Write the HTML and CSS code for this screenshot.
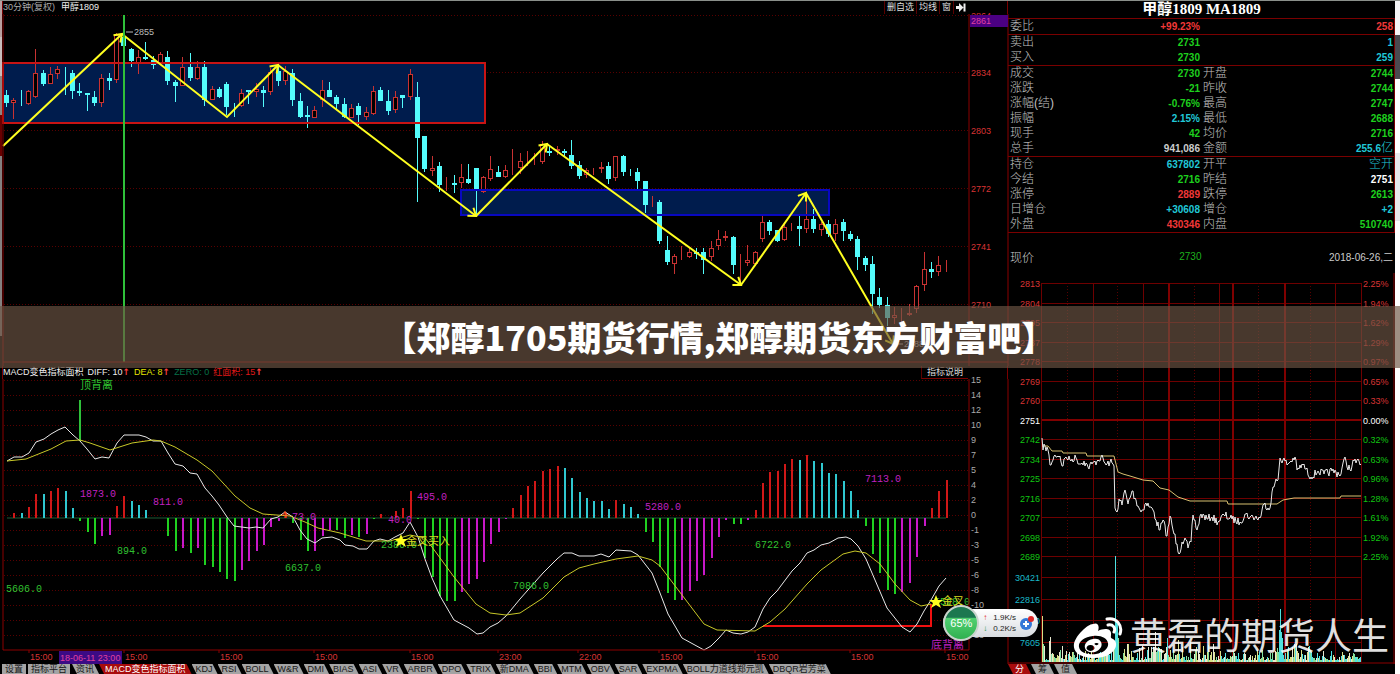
FILE: index.html
```html
<!DOCTYPE html>
<html lang="zh-CN">
<head>
    <meta charset="UTF-8">
    <meta name="viewport" content="width=device-width, initial-scale=1.0">
    <title>甲醇1809 MA1809</title>
    <link rel="stylesheet" href="styles.css">
</head>
<body>
    <div class="terminal">
        <div class="edge edge-left"></div>

        <main class="charts">
            <header class="chart-bar">
                <span class="dim">30分钟(复权)</span>
                <span class="name">甲醇1809</span>
                <nav class="tools">
                    <button type="button">删自选</button>
                    <button type="button">均线</button>
                    <button type="button">窗</button>
                    <button type="button" aria-label="下一页">
                        <svg class="next-icon" viewBox="0 0 10 9"><path d="M0 3h3V0l4.500 4.500L3 9V6H0zM7.500 0.500h2v8h-2z"/></svg>
                    </button>
                </nav>
            </header>

            <!-- Candlestick chart -->
            <svg class="plot" id="price-chart" viewBox="2 14 1006 352">
                <defs>
                    <marker id="arrow" viewBox="-8 -6 10 12" markerWidth="10" markerHeight="12" markerUnits="userSpaceOnUse" refX="0" refY="0" orient="auto">
                        <path d="M-7 -5L0 0L-7 5" fill="none" stroke="#ffff20" stroke-width="2"/>
                    </marker>
                </defs>
                <g id="price-grid"></g>
                <rect x="3" y="63" width="482" height="60" fill="#001c4d"/>
                <rect x="461" y="190" width="368" height="25" fill="#001c4d"/>
                <g id="candles"></g>
                <rect class="zone-red" x="3" y="63" width="482" height="60"/>
                <rect class="zone-blue" x="461" y="190" width="368" height="25"/>
                <path class="zigzag" d="M3 146L122 34"/>
                <path class="zigzag" d="M122 34L227 117L278 65"/>
                <path class="zigzag" d="M278 65L476 216"/>
                <path class="zigzag" d="M476 216L547 144"/>
                <path class="zigzag" d="M547 144L741 285"/>
                <path class="zigzag" d="M741 285L806 193"/>
                <path class="zigzag" d="M806 193L893 344"/>
                <path d="M124 15V362" stroke="#2fc03a" stroke-width="2"/>
                <path d="M126 32H133M896 344H903" stroke="#bbb"/>
                <text class="label-light" x="134" y="35">2855</text>
                <text class="label-light" x="904" y="347">2688</text>
                <path class="frame" d="M3 362H1008M3 14V366M969 14V366M1008 14V366"/>
                <rect x="970" y="15" width="38" height="12" fill="#4b0082"/>
                <text class="cursor-label" x="971" y="24">2861</text>
            </svg>

            <header class="chart-bar macd-bar">
                <span class="name">MACD变色指标面积</span>
                <span class="name">DIFF: 10<b class="up">↑</b></span>
                <span class="dea">DEA: 8<b class="up">↑</b></span>
                <span class="zero">ZERO: 0</span>
                <span class="area">红面积: 15<b class="up">↑</b></span>
                <nav class="tools">
                    <button type="button" class="help">指标说明</button>
                </nav>
            </header>

            <!-- MACD chart -->
            <svg class="plot" id="macd-chart" viewBox="2 379 1006 285">
                <g id="macd-grid"></g>
                <path d="M7 518H946" stroke="#1d5a35"/>
                <g id="macd-bars"></g>
                <path d="M80 400V441" stroke="#2fc03a" stroke-width="2"/>
                <path d="M763 626H931V604" fill="none" stroke="#f01010" stroke-width="2"/>
                <polyline id="diff-line" class="line-white"/>
                <polyline id="dea-line" class="line-yellow"/>
                <path d="M285 511V518M282 516L285 512L288 516" fill="none" stroke="#ff5020"/>
                <g id="macd-labels"></g>
                <path class="frame" d="M3 379V650H969V379M1008 379V664"/>
                <rect x="59" y="651" width="63" height="13" fill="#3b0a85"/>
                <g id="time-labels"></g>
                <path class="star" d="M401 534l2 5 5 0-4 3 2 5-5-3-5 3 2-5-4-3 5 0z"/>
                <path class="star" d="M936 595l2 5 5 0-4 3 2 5-5-3-5 3 2-5-4-3 5 0z"/>
            </svg>

            <nav class="tabs">
                <button type="button" class="square">设置</button>
                <button type="button" class="square">指标平台</button>
                <button type="button">资讯</button>
                <button type="button" class="active">MACD变色指标面积</button>
                <button type="button">KDJ</button>
                <button type="button">RSI</button>
                <button type="button">BOLL</button>
                <button type="button">W&amp;R</button>
                <button type="button">DMI</button>
                <button type="button">BIAS</button>
                <button type="button">ASI</button>
                <button type="button">VR</button>
                <button type="button">ARBR</button>
                <button type="button">DPO</button>
                <button type="button">TRIX</button>
                <button type="button">新DMA</button>
                <button type="button">BBI</button>
                <button type="button">MTM</button>
                <button type="button">OBV</button>
                <button type="button">SAR</button>
                <button type="button">EXPMA</button>
                <button type="button">BOLL力道线郑元凯</button>
                <button type="button">DBQR岩芳菜</button>
            </nav>

            <div class="net-widget">
                <div class="net-ball">65%</div>
                <div class="net-speed">
                    <span><i class="net-up">↑</i>1.9K/s</span>
                    <span><i class="net-down">↓</i>0.2K/s</span>
                </div>
                <svg class="net-plus" viewBox="0 0 14 16">
                    <circle cx="6" cy="9" r="6" fill="#3478d8"/>
                    <path d="M6 6v6M3 9h6" stroke="#fff" stroke-width="2"/>
                    <circle cx="11" cy="4" r="3" fill="#e02828"/>
                </svg>
            </div>
        </main>

        <aside class="quote">
            <h1>甲醇1809 MA1809</h1>
            <table>
                <tbody>
                    <tr class="sep"><th>委比</th><td class="red">+99.23%</td><th></th><td class="red">258</td></tr>
                    <tr><th>卖出</th><td class="green">2731</td><th></th><td class="cyan">1</td></tr>
                    <tr class="sep"><th>买入</th><td class="green">2730</td><th></th><td class="cyan">259</td></tr>
                    <tr><th>成交</th><td class="green">2730</td><th>开盘</th><td class="green">2744</td></tr>
                    <tr><th>涨跌</th><td class="green">-21</td><th>昨收</th><td class="green">2744</td></tr>
                    <tr><th>涨幅(结)</th><td class="green">-0.76%</td><th>最高</th><td class="green">2747</td></tr>
                    <tr><th>振幅</th><td class="cyan">2.15%</td><th>最低</th><td class="green">2688</td></tr>
                    <tr><th>现手</th><td class="green">42</td><th>均价</th><td class="green">2716</td></tr>
                    <tr class="sep"><th>总手</th><td>941,086</td><th>金额</th><td class="cyan">255.6<span class="cjk">亿</span></td></tr>
                    <tr><th>持仓</th><td class="cyan">637802</td><th>开平</th><td class="cyan"><span class="cjk">空开</span></td></tr>
                    <tr><th>今结</th><td class="green">2716</td><th>昨结</th><td class="white">2751</td></tr>
                    <tr><th>涨停</th><td class="red">2889</td><th>跌停</th><td class="green">2613</td></tr>
                    <tr><th>日增仓</th><td class="cyan">+30608</td><th>增仓</th><td class="cyan">+2</td></tr>
                    <tr class="sep"><th>外盘</th><td class="red">430346</td><th>内盘</th><td class="green">510740</td></tr>
                </tbody>
            </table>
            <div class="now">
                <span class="now-label">现价</span>
                <span class="now-price">2730</span>
                <span class="now-date">2018-06-26,二</span>
            </div>

            <!-- Intraday chart -->
            <svg class="plot" id="day-chart" viewBox="1008 273 387 391">
                <g id="day-grid"></g>
                <g id="volume"></g>
                <polyline id="avg-line" class="line-avg"/>
                <polyline id="day-line" class="line-white"/>
                <path class="frame" d="M1008 663H1395M1394 273V664"/>
            </svg>

            <nav class="tabs day-tabs">
                <button type="button" class="active">分</button>
                <button type="button">筹</button>
                <button type="button">值</button>
            </nav>

            <div class="watermark">
                <svg class="weibo" viewBox="0 0 50 42">
                    <path fill="#fff" fill-rule="evenodd" d="M20 7C24 5 27 8 25 14C31 11 39 11 38 18C38 20 37 21 40 22C45 25 44 32 37 37C28 43 11 42 4 36C-3 29 3 20 9 14C13 10 17 7 20 7ZM20 19C11 20 5 25 6 30C7 36 15 38 23 37C31 36 36 31 35 26C34 21 28 18 20 19Z"/>
                    <path fill="#fff" fill-rule="evenodd" d="M20 22C14 23 11 27 12 31C13 35 18 36 22 35C27 33 30 29 28 25C27 22 23 21 20 22ZM17 28a4 3 0 1 0 1 0ZM23 26a2 1 0 1 0 1 0Z"/>
                    <path d="M34 2C43 0 50 8 47 17M35 8C40 7 43 11 41 15" fill="none" stroke="#fff" stroke-width="3" stroke-linecap="round"/>
                </svg>
                <span>黄磊的期货人生</span>
            </div>
        </aside>

        <div class="edge edge-right"></div>
    </div>

    <div class="banner">【郑醇1705期货行情,郑醇期货东方财富吧】</div>

    <script src="chart.js"></script>
</body>
</html>
```
FILE: styles.css
```css
* {
    box-sizing: border-box;
}

body {
    margin: 0;
    background: #000;
    color: #ccc;
    font-family: "Liberation Sans", "Noto Sans CJK SC", sans-serif;
    font-size: 9px;
    overflow-x: hidden;
}

button {
    font-family: inherit;
    font-size: inherit;
    color: inherit;
    background: none;
    border: 0;
    margin: 0;
    padding: 0;
    cursor: pointer;
}

.terminal {
    display: grid;
    grid-template-columns: 2px minmax(0, 1006fr) minmax(0, 387fr) 5px;
    border-top: 1px solid #8a8f8a;
}

.edge-left {
    background: linear-gradient(#b9a0a0 0 36px, #c8bcbc 36px 75px, #8c8484 75px 114px, #6a0000 114px 155px, #848080 155px 335px, #000 335px);
}

.edge-right {
    background: linear-gradient(#f4f4f6 0 34px, #4a4a50 34px 78px, #fff 78px 152px, #e8e8ec 152px 220px, #fff 220px);
}

.charts,
.quote {
    position: relative;
}

.plot {
    display: block;
    width: 100%;
    height: auto;
    overflow: visible;
}

/* Bars above the charts */
.chart-bar {
    display: flex;
    align-items: center;
    gap: 6px;
    height: 13px;
    padding: 0 39px 0 0;
    line-height: 13px;
    white-space: nowrap;
    border-left: 1px solid #7a0000;
    border-right: 1px solid #7a0000;
}

.macd-bar {
    gap: 4px;
}

.dim {
    color: #aaa;
}

.name {
    color: #eee;
}

.dea {
    color: #e6e600;
}

.zero {
    color: #067048;
}

.area {
    color: #e01818;
}

.up {
    color: #ff4040;
    font-family: "DejaVu Sans", sans-serif;
}

.tools {
    display: flex;
    margin-left: auto;
}

.tools button {
    height: 13px;
    padding: 0 2px;
    line-height: 13px;
    border-left: 1px solid #5a0000;
    color: #ddd;
}

.tools .help {
    padding: 0 5px;
    border-bottom: 1px solid #7a0000;
}

.next-icon {
    display: block;
    width: 10px;
    height: 9px;
    fill: #eee;
}

/* Chart parts */
.grid-dot {
    stroke: #580000;
    stroke-dasharray: 1 2;
}

.grid-line {
    stroke: #6e0000;
}

.grid-bold {
    stroke: #800000;
    stroke-width: 2;
}

.frame {
    fill: none;
    stroke: #8c0000;
}

.axis-red {
    fill: #d83434;
}

.axis-gray {
    fill: #aaa;
}

.axis-white {
    fill: #fff;
}

.axis-green {
    fill: #12c512;
}

.axis-cyan {
    fill: #1ab8c8;
}

.label-light {
    fill: #bbb;
}

.cursor-label {
    fill: #e040a0;
}

.zone-red {
    fill: none;
    stroke: #c81414;
    stroke-width: 2;
}

.zone-blue {
    fill: none;
    stroke: #0808c0;
    stroke-width: 2;
}

.zigzag {
    fill: none;
    stroke: #ffff20;
    stroke-width: 2;
    marker-end: url(#arrow);
}

.candle-up {
    fill: #000;
    stroke: #c83232;
}

.candle-down {
    fill: #54fcfc;
    stroke: #54fcfc;
}

.line-white {
    fill: none;
    stroke: #e8e8e8;
}

.line-yellow {
    fill: none;
    stroke: #c8c828;
}

.line-avg {
    fill: none;
    stroke: #d8c070;
}

.star {
    fill: #ffff20;
}

.mono {
    font-family: "Liberation Mono", "Noto Sans CJK SC", monospace;
    font-size: 10px;
}

.note {
    font-size: 11px;
}

.magenta {
    fill: #c020c0;
}

.lime {
    fill: #30c030;
}

.yellow {
    fill: #d8d820;
}

/* Tabs at the bottom */
.tabs {
    display: flex;
    height: 10px;
}

.tabs button {
    flex: none;
    height: 10px;
    padding: 0 5px 0 4px;
    line-height: 10px;
    background: #a4a4a4;
    color: #181818;
    clip-path: polygon(0 0, calc(100% - 5px) 0, 100% 100%, 5px 100%);
}

.tabs .square {
    padding: 0 3px;
    margin-right: 2px;
    clip-path: none;
}

.tabs .active {
    padding: 0 6px;
    background: #a80c0c;
    color: #fff;
}

.day-tabs button,
.day-tabs .active {
    padding: 0 7px;
}

/* Quote panel */
.quote h1 {
    margin: 0;
    height: 18px;
    line-height: 17px;
    text-align: center;
    color: #fff;
    font-family: "Liberation Serif", "Noto Sans CJK SC", serif;
    font-size: 15px;
    border-bottom: 1px solid #7a0000;
}

.quote table {
    width: 100%;
    table-layout: fixed;
    border-collapse: separate;
    border-spacing: 0;
    border-right: 1px solid #7a0000;
}

.quote th,
.quote td {
    height: 15px;
    padding: 0 1px 0 2px;
    line-height: 15px;
    white-space: nowrap;
}

.quote th {
    text-align: left;
    font-size: 12px;
    font-weight: 300;
    color: #c0c0c0;
}

.quote td {
    text-align: right;
    font-size: 10px;
    font-weight: bold;
    color: #ccc;
}

.quote .sep th,
.quote .sep td {
    height: 16px;
    border-bottom: 1px solid #7a0000;
}

.quote .red {
    color: #f03838;
}

.quote .green {
    color: #1ed01e;
}

.quote .cyan {
    color: #20c8d8;
}

.quote .white {
    color: #fff;
}

.cjk {
    font-size: 12px;
    font-weight: 300;
}

.now {
    display: grid;
    grid-template-columns: 1fr 1fr 2fr;
    align-items: center;
    height: 40px;
    padding: 6px 2px 0;
    font-size: 10px;
}

.now-label {
    font-size: 12px;
    font-weight: 300;
}

.now-price {
    text-align: right;
    color: #1eb01e;
}

.now-date {
    text-align: right;
}

/* Things that float over the charts */
.banner {
    position: absolute;
    top: 306px;
    left: 0;
    right: 0;
    padding-left: 38px;
    background: rgba(109, 85, 68, 0.66);
    color: #fff;
    font-family: "Noto Sans CJK SC", sans-serif;
    font-size: 34px;
    font-weight: 900;
    line-height: 62px;
    text-align: center;
    white-space: nowrap;
}

.net-widget {
    position: absolute;
    right: -30px;
    bottom: 37px;
    z-index: 2;
    display: flex;
    align-items: center;
    gap: 4px;
    height: 28px;
    padding-right: 4px;
    border-radius: 14px;
    background: linear-gradient(#fff, #d8dce0);
    color: #222;
    font-size: 8px;
}

.net-ball {
    width: 36px;
    height: 36px;
    border: 2px solid #c8d4cc;
    border-radius: 50%;
    background: linear-gradient(#1c7850 0 32%, #50d070 36%, #30b050);
    color: #fff;
    font-size: 11px;
    line-height: 32px;
    text-align: center;
}

.net-speed span {
    display: flex;
    justify-content: space-between;
    gap: 6px;
    line-height: 11px;
}

.net-speed i {
    font-style: normal;
    font-weight: bold;
}

.net-up {
    color: #e03030;
}

.net-down {
    color: #209040;
}

.net-plus {
    width: 14px;
    height: 16px;
}

.watermark {
    position: absolute;
    right: 6px;
    bottom: 12px;
    display: flex;
    align-items: center;
    gap: 7px;
    color: rgba(255, 255, 255, 0.88);
    font-size: 37px;
    font-weight: 400;
    line-height: 48px;
    white-space: nowrap;
}

.weibo {
    width: 50px;
    height: 42px;
}
```
FILE: chart.js
```js
const NS = "http://www.w3.org/2000/svg";
const STEP = 7.34;

function add(parentId, tag, attrs, text) {
    const el = document.createElementNS(NS, tag);
    for (const key in attrs) {
        el.setAttribute(key, attrs[key]);
    }
    if (text !== undefined) {
        el.textContent = text;
    }
    document.getElementById(parentId).appendChild(el);
}

function barX(i) {
    return Math.round(7 + i * STEP);
}

// kind, high, body top, body bottom, low (r = up, c = down)
const candles = `c90,95,103,107 r98,100,103,119 c90,103,104,106 r90,91,104,105 r49,73,97,98 c70,73,84,86 r67,74,84,84 r66,69,74,79 c67,69,70,95 c70,73,91,99
c83,91,93,96 c93,93,95,111 c91,97,103,106 r74,78,103,107 c73,78,81,90 r33,35,80,83 c36,37,46,46 c48,49,61,67 r50,57,63,74 c42,57,59,60
c56,60,65,69 r52,54,63,63 c51,57,81,85 c80,82,86,102 r57,67,86,86 c53,67,78,81 r61,67,79,80 c61,67,100,106 r86,89,100,100 c87,89,97,98
c82,84,107,115 c103,107,108,117 r89,93,106,107 c90,90,92,104 r83,89,92,97 c86,90,93,107 r68,72,92,95 c64,71,81,86 r66,71,81,85 c69,73,100,106
c93,101,117,118 c106,115,117,128 r106,110,118,118 r80,90,100,107 c82,90,97,97 c95,97,104,109 c98,104,117,118 r104,108,118,118 c103,106,115,125 r107,112,117,120
r86,91,114,115 c87,90,101,101 c90,101,111,115 r91,97,110,113 c95,95,98,108 r69,74,97,100 c82,97,138,202 c136,136,169,172 r156,168,171,176 c162,166,185,192
r177,182,183,191 c175,183,185,193 r164,177,183,188 c164,179,183,184 c168,168,191,215 r176,177,192,193 r156,169,179,181 c166,172,177,177 r165,170,177,178 r149,168,169,175
r153,161,168,174 r151,161,162,166 r153,161,162,165 r141,144,162,164 c145,151,153,156 r146,149,151,155 c149,151,153,156 c140,155,166,169 c161,165,176,179 r168,170,175,178
r168,170,171,175 r162,167,169,173 c162,166,179,184 r156,156,178,181 c155,156,172,176 c169,172,173,176 c168,172,181,190 c181,181,205,213 r196,203,204,207 c200,202,241,244
c236,250,262,265 r254,256,264,274 r246,256,257,260 r248,252,257,258 c248,252,254,259 c248,252,260,274 r241,248,257,261 r230,239,246,250 r231,236,238,241 c236,237,265,274
r254,265,266,284 r245,260,263,266 r251,252,264,266 r215,222,239,242 c220,222,231,235 c230,230,241,242 r222,227,240,241 r223,226,227,231 c215,226,229,246 r194,219,229,233
c209,219,229,233 r222,224,230,236 c220,224,234,237 r219,224,234,241 c219,222,231,241 c231,234,239,241 c236,239,257,270 c256,258,265,271 c256,264,294,314 c288,297,305,308
c297,305,318,326 r307,315,318,324 r308,315,316,323 r304,313,315,316 r285,286,309,313 r252,269,285,291 c262,269,272,278 r256,265,272,276 r260,265,266,272`;

candles.split(/\s+/).forEach((item, i) => {
    const [high, top, bottom, low] = item.slice(1).split(",").map(Number);
    const cls = item[0] === "r" ? "candle-up" : "candle-down";
    const x = barX(i) - 0.5;
    add("candles", "path", { class: cls, d: `M${x} ${high}V${low}` });
    add("candles", "rect", { class: cls, x: x - 2, y: top + 0.5, width: 4, height: Math.max(bottom - top - 1, 0) });
});

// Price grid and axis
add("price-grid", "path", { class: "grid-dot", d: "M4 15.5H969" });
add("price-grid", "text", { class: "axis-red", x: 971, y: 19 }, 2864);
[2834, 2803, 2772, 2741, 2710].forEach((price, i) => {
    const y = 72 + i * 58;
    add("price-grid", "path", { class: "grid-dot", d: `M4 ${y + 0.5}H969` });
    add("price-grid", "text", { class: "axis-red", x: 971, y: y + 4 }, price);
});

// MACD histogram (r red, c cyan, g green, m magenta)
const barColors = { r: "#d01818", c: "#30c8d0", g: "#20d020", m: "#c818c8" };
const bars = `r0 r5 c5 r11 r24 c24 r27 r30 c27 c10 g-3 g-14 g-26 m-18 m-17 r12 r22 c17 c13 c8 r0 r0 g-18 g-33 m-30 g-35 m-30 g-47 g-49 g-54 g-61 g-63
m-52 m-43 m-33 m-27 m-9 m-3 r5 g-5 g-22 g-33 m-33 m-18 m-12 g-12 g-20 m-17 g-19 m-16 g-1 r4 r0 r7 r10 r27 g-1 g-40 g-59 g-78 g-83 g-83 m-74 m-66
m-61 m-44 m-26 m-14 m-1 r10 r23 r32 r37 r47 r49 r52 c50 c40 c26 c20 c17 c17 c9 r18 c14 c11 c4 g-14 g-24 g-49 g-75 g-82 m-82 m-73 m-63 m-57
m-40 m-19 m-2 g-6 g-6 m-2 r8 r35 r46 r47 r54 r59 c58 r63 c57 c55 c45 c44 c37 c27 c8 g-8 g-36 g-55 g-72 g-76 m-74 m-65 m-39 m-8 r10 r27 r38`;

bars.split(/\s+/).forEach((item, i) => {
    const value = Number(item.slice(1));
    if (value) {
        add("macd-bars", "path", { stroke: barColors[item[0]], "stroke-width": 2, d: `M${barX(i)} 518V${518 - value}` });
    }
});

[15, 14, 12, 10, 9, 7, 5, 4, 2, 0, -1, -3, -5, -6, -8, -10, -11, -13].forEach((value, i) => {
    const y = 380 + i * 15;
    add("macd-grid", "path", { class: "grid-dot", d: `M4 ${y + 0.5}H969` });
    add("macd-grid", "text", { class: "axis-gray", x: 971, y: y + 3 }, value);
});

const diff = "7,461 14,457 22,457 29,453 36,442 44,439 51,434 58,430 65,427 73,435 80,441 87,449 95,459 102,457 109,458 117,443 124,435 139,435 146,437 153,441 161,441 168,453 175,464 183,466 190,473 197,474 205,488 212,496 219,505 227,517 234,526 249,528 256,527 263,528 271,519 278,517 285,512 293,517 300,530 307,539 315,543 322,538 332,537 340,540 345,545 353,546 359,549 367,549 374,541 380,539 388,541 395,537 403,533 410,522 418,537 425,559 432,578 440,596 454,620 469,628 477,634 483,633 490,627 498,623 506,616 520,599 535,582 543,573 557,559 564,553 572,553 579,556 594,556 601,554 609,557 616,550 631,551 638,555 652,573 660,593 668,614 682,638 704,650 711,646 719,638 726,630 733,633 741,634 748,632 755,627 763,609 770,598 777,591 792,571 800,563 807,553 814,550 821,545 829,543 838,538 846,537 851,539 858,546 866,559 887,608 902,627 910,632 917,624 924,611 931,600 939,586 946,578";
const dea = "7,461 26,459 51,449 66,441 80,440 90,443 110,450 132,443 153,440 161,441 175,447 197,460 212,471 235,496 250,508 263,514 290,516 305,522 318,528 340,533 366,541 390,541 400,538 410,535 425,538 432,547 454,577 476,604 490,613 506,615 520,613 543,598 564,577 579,568 594,564 616,559 638,556 652,560 660,566 682,595 704,624 717,630 755,631 770,622 785,609 807,584 821,570 843,554 855,551 866,553 880,564 895,584 910,600 921,606 931,604";
document.getElementById("diff-line").setAttribute("points", diff);
document.getElementById("dea-line").setAttribute("points", dea);

[
    [80, 497, "magenta", "1873.0"], [153, 505, "magenta", "811.0"], [117, 554, "lime", "894.0"],
    [6, 592, "lime", "5606.0"], [285, 571, "lime", "6637.0"], [292, 520, "magenta", "73.0"],
    [388, 523, "magenta", "40.0"], [417, 500, "magenta", "495.0"], [381, 548, "lime", "2386.0"],
    [513, 589, "lime", "7086.0"], [645, 510, "magenta", "5280.0"], [755, 548, "lime", "6722.0"],
    [865, 482, "magenta", "7113.0"], [934, 605, "lime", "5528.0"]
].forEach(([x, y, color, text]) => add("macd-labels", "text", { class: "mono " + color, x, y }, text));

add("macd-labels", "text", { class: "note lime", x: 80, y: 389 }, "顶背离");
add("macd-labels", "text", { class: "note magenta", x: 931, y: 649 }, "底背离");
add("macd-labels", "text", { class: "note yellow", x: 406, y: 545 }, "金叉买入");
add("macd-labels", "text", { class: "note yellow", x: 942, y: 605 }, "金叉");

[[30, "15:00"], [125, "15:00"], [220, "15:00"], [315, "15:00"], [411, "15:00"], [499, "23:00"], [579, "22:00"], [660, "15:00"], [756, "15:00"], [851, "15:00"], [946, "15:00"]]
    .forEach(([x, text]) => {
        add("time-labels", "path", { class: "frame", d: `M${x - 1} 650V653` });
        add("time-labels", "text", { class: "axis-red", x: x, y: 660 }, text);
    });
add("time-labels", "text", { class: "cursor-label", x: 60, y: 661 }, "18-06-11 23:00");

// Intraday grid
const left = [2813, 2804, 2795, 2787, 2778, 2769, 2760, 2751, 2742, 2734, 2725, 2716, 2707, 2698, 2689];
const right = ["2.25%", "1.94%", "1.62%", "1.29%", "0.97%", "0.65%", "0.33%", "0.00%", "0.32%", "0.63%", "0.96%", "1.28%", "1.61%", "1.92%", "2.25%"];
left.forEach((price, i) => {
    const y = Math.round(283 + i * 19.5);
    const color = i < 7 ? "axis-red" : i === 7 ? "axis-white" : "axis-green";
    add("day-grid", "path", { class: i === 7 ? "grid-bold" : "grid-line", d: `M1041 ${i === 7 ? y : y + 0.5}H1361` });
    add("day-grid", "text", { class: color, x: 1040, y: y + 4, "text-anchor": "end" }, price);
    add("day-grid", "text", { class: color, x: 1363, y: y + 4 }, right[i]);
});
[30421, 22816, 15210, 7605].forEach((vol, i) => {
    const y = Math.round(577 + i * 21.5);
    add("day-grid", "path", { class: "grid-line", d: `M1041 ${y + 0.5}H1361` });
    add("day-grid", "text", { class: "axis-cyan", x: 1040, y: y + 4, "text-anchor": "end" }, vol);
});
[[1041, "line"], [1067, "dot"], [1093, "line"], [1117, "dot"], [1143, "line"], [1169, "bold"], [1194, "dot"], [1219, "line"], [1233, "bold"], [1258, "dot"], [1285, "bold"], [1310, "dot"], [1335, "line"], [1361, "line"]]
    .forEach(([x, kind]) => {
        add("day-grid", "path", { class: "grid-" + kind, d: `M${kind === "bold" ? x : x + 0.5} 283V662` });
    });

let seed = 7;
function random() {
    seed = (seed * 16807) % 2147483647;
    return seed / 2147483647;
}

// Intraday price with tick noise between the turning points
const turns = [1042,438,1043,450,1045,446,1048,450,1050,465,1052,462,1055,455,1060,456,1062,466,1066,457,1070,460,1076,458,1080,464,1084,461,1088,467,1092,464,1097,461,1101,457,1106,465,1110,462,1114,466,1115,508,1117,512,1119,499,1122,505,1125,490,1128,504,1132,491,1135,498,1141,512,1146,503,1150,507,1153,510,1156,520,1160,530,1163,520,1167,536,1170,516,1173,530,1177,544,1179,554,1182,542,1185,538,1188,548,1191,542,1193,515,1197,530,1201,514,1207,519,1212,517,1218,522,1224,515,1232,519,1240,522,1245,514,1250,517,1260,518,1264,504,1270,508,1272,492,1275,483,1278,480,1280,458,1288,464,1295,457,1297,470,1303,465,1311,477,1318,471,1324,474,1332,471,1341,474,1344,459,1350,470,1354,461,1361,464];
const dayPoints = [];
for (let i = 0; i < turns.length - 2; i += 2) {
    const [x1, y1, x2, y2] = turns.slice(i, i + 4);
    dayPoints.push(`${x1},${y1}`);
    for (let x = x1 + 1; x < x2; x++) {
        const y = y1 + (y2 - y1) * (x - x1) / (x2 - x1) + (random() - 0.5) * 8;
        dayPoints.push(`${x},${Math.round(y)}`);
    }
}
dayPoints.push("1361,464");
document.getElementById("day-line").setAttribute("points", dayPoints.join(" "));
document.getElementById("avg-line").setAttribute("points", "1042,446 1048,446 1052,451 1062,451 1063,453 1086,453 1087,456 1114,456 1118,472 1123,474 1130,476 1143,480 1153,481 1160,488 1169,490 1178,497 1190,501 1227,501 1228,504 1277,504 1283,500 1294,498 1340,498 1341,496 1361,496");

// Volume bars
const peaks = { 1042: 46, 1043: 18, 1044: 16, 1049: 21, 1050: 25, 1062: 16, 1115: 106, 1116: 42, 1117: 38, 1118: 24, 1155: 30, 1167: 24, 1178: 22, 1190: 20, 1279: 32, 1280: 53, 1281: 30, 1282: 24 };
const volColors = ["#50e0e0", "#80e0a0", "#d8e088", "#e8e8d0"];
for (let x = 1042; x < 1361; x++) {
    const busy = (x > 1112 && x < 1215) || (x > 1270 && x < 1315);
    const height = peaks[x] || Math.round(2 + Math.pow(random(), 2) * (busy ? 17 : 10));
    const color = x === 1115 ? volColors[0] : volColors[Math.floor(random() * 4)];
    add("volume", "path", { stroke: color, d: `M${x + 0.5} 662V${662 - height}` });
}
```
